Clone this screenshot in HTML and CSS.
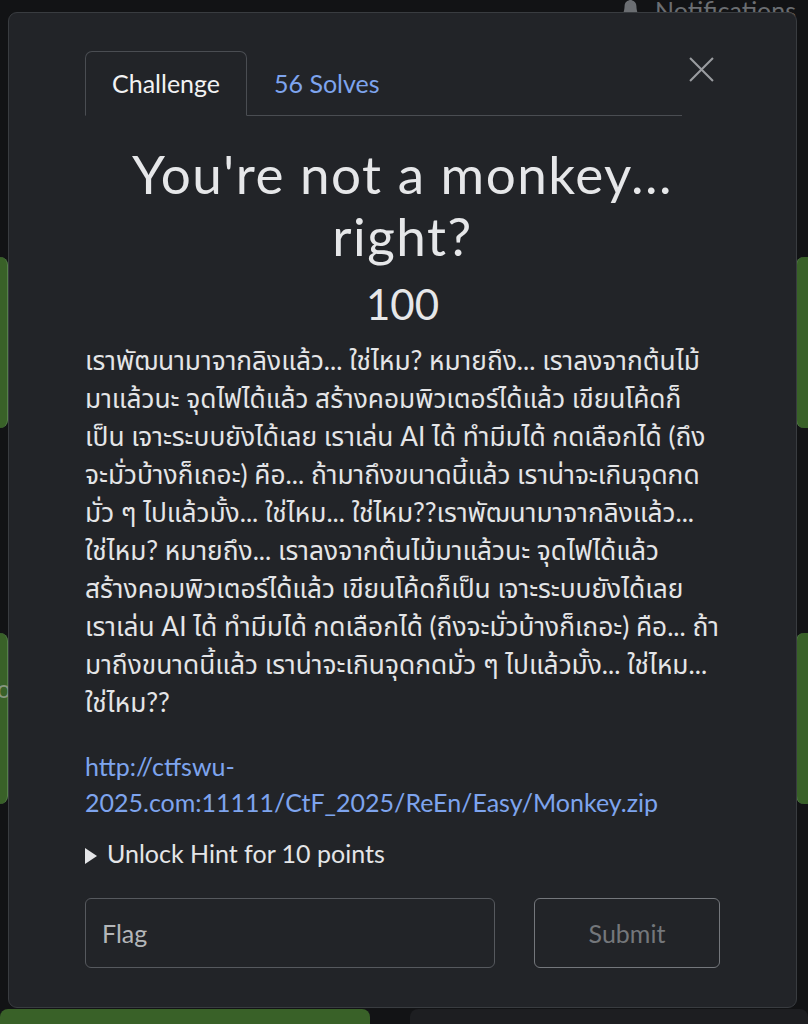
FILE: index.html
```html
<!DOCTYPE html>
<html lang="th">
<head>
  <meta charset="UTF-8">
  <meta name="viewport" content="width=device-width, initial-scale=1.0">
  <title>You're not a monkey... right?</title>
  <link rel="stylesheet" href="styles.css">
</head>
<body>

<div class="page">
  <div class="topbar">
    <span class="notif">
      <svg class="bell" viewBox="0 0 16 16" width="19" height="19"><path d="M8 16a2 2 0 0 0 2-2H6a2 2 0 0 0 2 2zm.995-14.901a1 1 0 1 0-1.99 0A5 5 0 0 0 3 6c0 1.098-.5 6-2 7h14c-1.5-1-2-5.902-2-7 0-2.42-1.72-4.440-4.005-4.901z" fill="currentColor"/></svg>
      Notifications
    </span>
  </div>

  <div class="board">
    <div class="row">
      <div class="card green left"></div>
      <div class="card green right"></div>
    </div>
    <div class="row">
      <div class="card green left"><span class="card-label">Tools</span></div>
      <div class="card green right"></div>
    </div>
    <div class="row bottom">
      <div class="card green wide"></div>
      <div class="card dark"></div>
    </div>
  </div>
</div>

<div class="modal">
  <div class="modal-head">
    <ul class="tabs">
      <li class="tab active">Challenge</li>
      <li class="tab">56 Solves</li>
    </ul>
    <button class="close" type="button" aria-label="Close">
      <svg viewBox="0 0 24 24" width="25" height="25"><path d="M1 1L23 23M23 1L1 23" stroke="currentColor" stroke-width="2" fill="none"/></svg>
    </button>
  </div>

  <h2 class="title">You're not a monkey... right?</h2>
  <h3 class="points">100</h3>

  <p class="desc">เราพัฒนามาจากลิงแล้ว... ใช่ไหม? หมายถึง... เราลงจากต้นไม้<br>มาแล้วนะ จุดไฟได้แล้ว สร้างคอมพิวเตอร์ได้แล้ว เขียนโค้ดก็<br>เป็น เจาะระบบยังได้เลย เราเล่น AI ได้ ทำมีมได้ กดเลือกได้ (ถึง<br>จะมั่วบ้างก็เถอะ) คือ... ถ้ามาถึงขนาดนี้แล้ว เราน่าจะเกินจุดกด<br>มั่ว ๆ ไปแล้วมั้ง... ใช่ไหม... ใช่ไหม??เราพัฒนามาจากลิงแล้ว...<br>ใช่ไหม? หมายถึง... เราลงจากต้นไม้มาแล้วนะ จุดไฟได้แล้ว<br>สร้างคอมพิวเตอร์ได้แล้ว เขียนโค้ดก็เป็น เจาะระบบยังได้เลย<br>เราเล่น AI ได้ ทำมีมได้ กดเลือกได้ (ถึงจะมั่วบ้างก็เถอะ) คือ... ถ้า<br>มาถึงขนาดนี้แล้ว เราน่าจะเกินจุดกดมั่ว ๆ ไปแล้วมั้ง... ใช่ไหม...<br>ใช่ไหม??</p>

  <a class="file-link" href="#">http://ctfswu-2025.com:11111/CtF_2025/ReEn/Easy/Monkey.zip</a>

  <details class="hint">
    <summary><span class="caret"></span>Unlock Hint for 10 points</summary>
  </details>

  <form class="flag-form">
    <input type="text" class="flag-input" placeholder="Flag">
    <button type="button" class="submit">Submit</button>
  </form>
</div>

</body>
</html>
```

FILE: styles.css
```css
* {
  box-sizing: border-box;
}

body {
  margin: 0;
  background-color: #121315;
  font-family: Lato, "Noto Sans Thai", "Noto Sans", sans-serif;
  color: #e4e5e7;
  overflow: hidden;
  height: 1024px;
}

.page {
  height: 1024px;
  overflow: hidden;
}

.topbar {
  height: 20px;
  display: flex;
  justify-content: flex-end;
  padding-right: 12px;
}

.notif {
  display: flex;
  align-items: center;
  gap: 15px;
  height: 25px;
  margin-top: -2px;
  font-size: 25px;
  line-height: 25px;
  color: #6b6e72;
}

.bell {
  color: #6b6e72;
  margin-top: -4px;
}

.board {
  padding-top: 237px;
}

.row {
  display: flex;
  justify-content: space-between;
  margin: 0 -200px 205px -200px;
}

.card {
  height: 171px;
  border-radius: 8px;
}

.left {
  width: 208px;
  border-right: 1px solid #55804a;
}

.right {
  width: 212px;
  border-left: 1px solid #55804a;
}

.green {
  background-color: #396128;
}

.card-label {
  display: block;
  padding: 40px 0 0 185px;
  font-size: 25px;
  color: #87967f;
}

.row.bottom {
  margin: 0;
  gap: 40px;
}

.wide {
  width: 370px;
  flex: none;
}

.dark {
  flex: 1;
  background-color: #1d1e21;
}

.modal {
  position: absolute;
  top: 12px;
  left: 8px;
  width: 789px;
  height: 996px;
  padding: 38px 76px 37px 76px;
  background-color: #222428;
  border: 1px solid #393c40;
  border-radius: 9px;
}

.modal-head {
  display: flex;
  align-items: flex-start;
}

.tabs {
  flex: 1;
  display: flex;
  list-style: none;
  margin: 0;
  padding: 0;
  border-bottom: 1px solid #4a4d52;
}

.tab {
  padding: 16px 26px 17px 26px;
  font-size: 25px;
  line-height: 30px;
  color: #7ea4ee;
  border: 1px solid transparent;
  border-top-left-radius: 7px;
  border-top-right-radius: 7px;
  margin-bottom: -1px;
}

.tab.active {
  color: #f2f2f3;
  border-color: #4a4d52;
  border-bottom-color: #222428;
}

.close {
  background: none;
  border: none;
  color: #9a9ca0;
  padding: 6px 0 0 0;
  width: 38px;
  cursor: pointer;
}

.title {
  margin: 27px 0 0 0;
  text-align: center;
  font-size: 53px;
  font-weight: 400;
  letter-spacing: 1.5px;
  line-height: 62px;
  color: #e6e7e9;
  padding: 0 30px;
}

.points {
  margin: 12px 0 0 0;
  text-align: center;
  font-size: 42px;
  font-weight: 400;
  line-height: 50px;
  color: #e6e7e9;
}

.desc {
  margin: 12px 0 0 0;
  font-size: 26.3px;
  line-height: 38px;
  white-space: nowrap;
  color: #e4e5e7;
}

.file-link {
  display: block;
  margin-top: 27px;
  font-size: 25px;
  line-height: 36px;
  color: #7ea4ee;
  text-decoration: none;
  width: 600px;
}

.hint {
  margin-top: 15px;
  font-size: 25px;
  line-height: 36px;
  color: #e4e5e7;
}

.hint summary {
  list-style: none;
  cursor: pointer;
}

.hint summary::-webkit-details-marker {
  display: none;
}

.caret {
  display: inline-block;
  width: 0;
  height: 0;
  margin: 0 10px 0 0;
  border-left: 12px solid #e4e5e7;
  border-top: 8px solid transparent;
  border-bottom: 8px solid transparent;
  vertical-align: -1px;
}

.flag-form {
  display: flex;
  gap: 39px;
  margin-top: 27px;
}

.flag-input {
  width: 410px;
  height: 70px;
  padding: 0 16px;
  background-color: #222428;
  border: 1px solid #56595e;
  border-radius: 6px;
  font-family: Lato, sans-serif;
  font-size: 25px;
  color: #e4e5e7;
}

.flag-input::placeholder {
  color: #b4b6b9;
}

.submit {
  width: 186px;
  height: 70px;
  background: none;
  border: 1px solid #74777c;
  border-radius: 6px;
  font-family: Lato, sans-serif;
  font-size: 25px;
  color: #74777b;
}
```
